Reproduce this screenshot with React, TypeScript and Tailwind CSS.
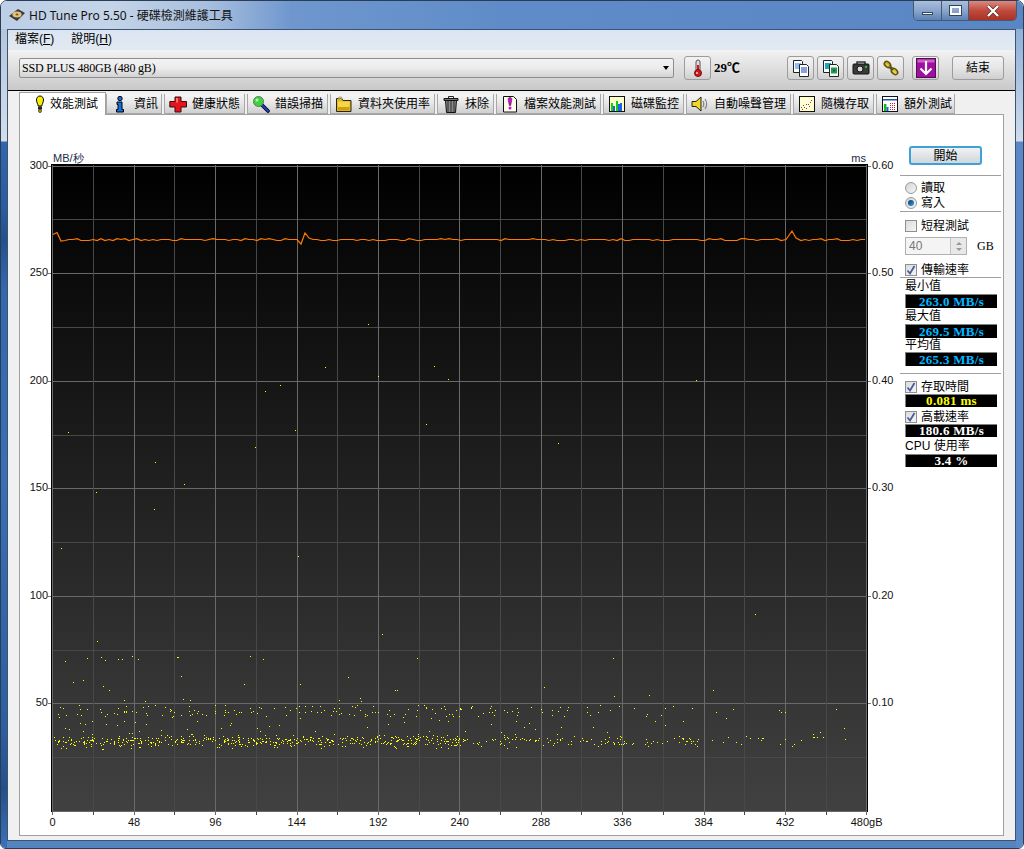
import React from "react";

function rng(seed: number) {
  let s = seed;
  return () => {
    s = (s * 1664525 + 1013904223) % 4294967296;
    return s / 4294967296;
  };
}

const sparse: [number, number][] = [
  [368,324],[325,367],[434,366],[448,379],[378,376],[696,380],[280,385],[265,391],[295,430],[426,424],[68,432],[558,443],[255,447],[155,462],[184,484],[96,492],[154,509],[61,548],[298,556],[755,614],[382,634],[97,641],
  [65,661],[87,658],[101,657],[105,660],[118,659],[122,659],[132,656],[138,659],[177,657],[178,657],[250,656],[263,659],[417,658],[181,676],[73,682],[83,680],[103,686],[109,690],[244,684],[300,684],[348,677],[395,690],[397,690],[124,700],[145,701],[183,699],[190,700],[339,700],[360,698],[361,701],[613,658],[544,687],[713,690],[614,696],[649,695],
];

function buildDots() {
  const r = rng(20240611);
  const pts: [number, number][] = [...sparse];
  const add = (n: number, x0: number, x1: number, y0: number, y1: number, g: boolean) => {
    for (let i = 0; i < n; i++) {
      const x = x0 + r() * (x1 - x0);
      const t = g ? (r() + r() + r()) / 3 : r();
      pts.push([Math.round(x), Math.round(y0 + t * (y1 - y0))]);
    }
  };
  add(500, 53, 460, 732, 750, true);
  add(115, 460, 700, 732, 750, true);
  add(22, 700, 860, 733, 749, true);
  add(125, 53, 460, 705, 716, false);
  add(42, 460, 700, 705, 716, false);
  add(6, 700, 860, 708, 714, false);
  add(38, 53, 460, 716, 734, false);
  add(14, 460, 700, 716, 734, false);
  add(3, 700, 860, 716, 734, false);
  return pts.map(([x, y]) => `M${x} ${y}h1v1h-1z`).join("");
}

function buildLine() {
  const r = rng(77123);
  const spikes: [number, number][] = [
    [53, 234.5], [57, 232.5], [61, 241],
    [297, 239.5], [301, 244], [305, 233], [309, 238],
    [786, 239.5], [792, 231], [796, 238],
  ];
  const pts: [number, number][] = [...spikes];
  for (let x = 65; x <= 866; x += 4) {
    if (spikes.some(([sx]) => Math.abs(sx - x) < 4)) continue;
    pts.push([x, 239.5 + (r() < 0.3 ? 1 : r() < 0.25 ? -0.8 : 0)]);
  }
  pts.sort((a, b) => a[0] - b[0]);
  return pts.map(([x, y]) => `${x},${y}`).join(" ");
}

const DOTS = buildDots();
const LINE = buildLine();

function Chart() {
  const vs = Array.from({ length: 21 }, (_, i) => ({ x: Math.round(52.3 + 40.7 * i), major: i % 2 === 0 }));
  const hs = Array.from({ length: 13 }, (_, i) => ({ y: Math.round(811 - 53.78 * i), major: i % 2 === 0 }));
  const left = ["", "50", "100", "150", "200", "250", "300"];
  const right = ["", "0.10", "0.20", "0.30", "0.40", "0.50", "0.60"];
  const bottom = ["0", "48", "96", "144", "192", "240", "288", "336", "384", "432", "480gB"];
  return (
    <svg
      width={880}
      height={722}
      viewBox="20 115 880 722"
      className="block shrink-0 text-[11px] font-['Liberation_Sans',sans-serif]"
    >
      <defs>
        <linearGradient id="chartBg" x1="0" y1="0" x2="0" y2="1">
          <stop offset="0" stopColor="#000000" />
          <stop offset="1" stopColor="#414141" />
        </linearGradient>
      </defs>
      <g shapeRendering="crispEdges">
        <rect x={51} y={164} width={817} height={648} fill="#000" />
        <rect x={53} y={165} width={813} height={646} fill="url(#chartBg)" />
        {hs.map((h) => (
          <rect key={h.y} x={53} y={h.y} width={813} height={1} fill={h.major ? "#696969" : "#484848"} />
        ))}
        {vs.map((v) => (
          <rect key={v.x} x={v.x} y={165} width={1} height={650} fill={v.major ? "#6a6a6a" : "#484848"} />
        ))}
        {hs.filter((h) => h.major && h.y < 800).map((h) => (
          <g key={h.y}>
            <rect x={48} y={h.y} width={3} height={1} fill="#777" />
            <rect x={868} y={h.y} width={3} height={1} fill="#777" />
          </g>
        ))}
        <path d={DOTS} fill="#ffff00" />
      </g>
      <polyline points={LINE} fill="none" stroke="#ff7a00" strokeWidth={1.2} />
      <text x={53} y={162} fill="#1a2a4a">MB/秒</text>
      <text x={866} y={162} textAnchor="end" fill="#1a2a4a">ms</text>
      {left.map((t, i) => (
        <text key={t + i} x={48} y={811 - 107.56 * i + 3} textAnchor="end" fill="#111">{t}</text>
      ))}
      {right.map((t, i) => (
        <text key={t + i} x={872} y={811 - 107.56 * i + 3} fill="#111">{t}</text>
      ))}
      {bottom.map((t, i) => (
        <text key={t} x={52.6 + 81.4 * i} y={826} textAnchor="middle" fill="#111">{t}</text>
      ))}
    </svg>
  );
}

/* ---------- icons ---------- */
const S = { width: 18, height: 18, viewBox: "0 0 18 18", className: "block shrink-0" };

const Bulb = () => (
  <svg {...S}>
    <path d="M9 1C6.500 1 5.500 3 5.500 5c0 2.500 1.500 4 1.700 6h3.600c.2-2 1.700-3.500 1.700-6 0-2-1-4-3.500-4z" fill="#f6ee00" stroke="#000" />
    <rect x="7" y="11.500" width="4" height="3" fill="#222" />
    <circle cx="9" cy="16" r="1.500" fill="#c8b400" stroke="#000" strokeWidth=".6" />
  </svg>
);
const Info = () => (
  <svg {...S}>
    <circle cx="9" cy="3.500" r="2.200" fill="#1470e0" stroke="#000" />
    <path d="M6 7h5v7.500h1.500V17h-7v-2.500H7V9.500H6z" fill="#1470e0" stroke="#000" />
  </svg>
);
const Cross = () => (
  <svg {...S}>
    <path d="M6 2h6v4.500h5.500v5.500H12v5H6v-5H.8V6.500H6z" fill="#e8141c" stroke="#3a0a0a" />
    <path d="M7 3h2v4.500H7z" fill="#ff7070" />
  </svg>
);
const Magnifier = () => (
  <svg {...S}>
    <path d="M10 10l6 6" stroke="#000" strokeWidth="3.600" strokeLinecap="round" />
    <path d="M10 10l6 6" stroke="#1c3fc8" strokeWidth="2" strokeLinecap="round" />
    <circle cx="6.500" cy="6.500" r="5" fill="#3fd23f" stroke="#5a7a5a" />
    <circle cx="5" cy="5" r="1.500" fill="#b8f5b8" />
  </svg>
);
const Folder = () => (
  <svg {...S}>
    <path d="M1.500 3.500h5l1.500 2h8v11h-14.500z" fill="#e2b90f" stroke="#222" />
    <path d="M2.500 3.500c2-2 4-2 5 0" fill="#f9efa0" stroke="#555" strokeWidth=".6" />
    <rect x="3" y="6.500" width="11.500" height="9" fill="#f5d64a" />
    <rect x="3" y="12" width="11.500" height="3.500" fill="#cf9f0a" />
  </svg>
);
const Trash = () => (
  <svg {...S}>
    <path d="M2 3.500h14v2H2z" fill="#777" stroke="#111" />
    <path d="M6.500 3.500V1.500h5v2" fill="none" stroke="#222" />
    <path d="M3.500 5.500h11l-1 12h-9z" fill="#8a8a8a" stroke="#111" />
    <path d="M6 6v11M9 6v11M12 6v11" stroke="#2c2c2c" />
  </svg>
);
const FileEx = () => (
  <svg {...S}>
    <path d="M2.500 1.500h10l3 3v12.500h-13z" fill="#fffff0" stroke="#111" />
    <path d="M9 2.500c2 0 2 1.500 1.700 3L9.700 10.500H8.300L7.300 5.500C7 4 7 2.500 9 2.500z" fill="#d010c8" stroke="#301030" strokeWidth=".5" />
    <circle cx="9" cy="13" r="1.500" fill="#d010c8" />
  </svg>
);
const BarsIcon = () => (
  <svg {...S}>
    <rect x="1.500" y="1.500" width="15" height="15" fill="#ffffc8" stroke="#111" />
    <rect x="3" y="8" width="2" height="8" fill="#10d010" />
    <rect x="5" y="11" width="2" height="5" fill="#2060f0" />
    <rect x="8" y="6" width="2" height="10" fill="#10d010" />
    <rect x="10" y="9" width="2" height="7" fill="#2060f0" />
    <rect x="12" y="8" width="2" height="8" fill="#2060f0" />
  </svg>
);
const Speaker = () => (
  <svg {...S}>
    <path d="M1 6.500h4l5-4.500v14l-5-4.500H1z" fill="#f0d820" stroke="#222" />
    <path d="M12 6c1 2 1 4 0 6M14 4c2 3 2 7 0 10" fill="none" stroke="#888" strokeWidth="1.300" />
  </svg>
);
const Scatter = () => (
  <svg {...S}>
    <rect x="1.500" y="1.500" width="15" height="15" fill="#ffffd0" stroke="#111" />
    <path d="M4 14h1v1H4zM6 12h1v1H6zM8 13h1v1H8zM10 9h1v1h-1zM12 7h1v1h-1z" fill="#e02020" />
    <path d="M5 10h1v1H5zM8 9h1v1H8zM11 11h1v1h-1zM13 5h1v1h-1zM3 12h1v1H3z" fill="#3050e0" />
  </svg>
);
const CalcIcon = () => (
  <svg {...S}>
    <rect x="1.500" y="1.500" width="15" height="15" fill="#fff" stroke="#111" />
    <rect x="2" y="4" width="14" height="1.500" fill="#2050b0" />
    <rect x="3" y="9" width="2.500" height="7" fill="#10c010" />
    <rect x="5.500" y="12" width="2" height="4" fill="#2060f0" />
    <path d="M9 8h1v1H9zM11 8h1v1h-1zM13 8h1v1h-1zM9 10h1v1H9zM11 10h1v1h-1zM13 10h1v1h-1zM9 12h1v1H9zM11 12h1v1h-1zM13 12h1v1h-1zM9 14h1v1H9zM11 14h1v1h-1zM13 14h1v1h-1z" fill="#c02040" />
  </svg>
);
const Thermo = () => (
  <svg {...S} className="block">
    <rect x="7" y="1" width="4" height="11" rx="2" fill="#e8d8d8" stroke="#555" />
    <rect x="8" y="6" width="2" height="7" fill="#d81818" />
    <circle cx="9" cy="14" r="3.500" fill="#d81818" stroke="#6a1010" />
    <circle cx="8" cy="14" r="1" fill="#ffd0d0" />
  </svg>
);
const Docs = () => (
  <svg {...S} className="block">
    <path d="M1.500 1.500h8l1 1v11h-9z" fill="#fff" stroke="#222" />
    <path d="M3 5h6M3 7h6M3 9h6" stroke="#1080f0" />
    <path d="M7.500 5.500h7l2 2v10h-9z" fill="#fff" stroke="#222" />
    <path d="M9 9h6M9 11h6M9 13h6" stroke="#1040c0" />
  </svg>
);
const DocsPic = () => (
  <svg {...S} className="block">
    <path d="M1.500 1.500h8l1 1v11h-9z" fill="#fff" stroke="#222" />
    <rect x="3" y="4" width="6" height="6" fill="#18a0e8" />
    <rect x="4.500" y="6" width="2" height="2" fill="#20c020" />
    <path d="M7.500 5.500h7l2 2v10h-9z" fill="#f8f8f8" stroke="#222" />
    <rect x="9" y="8.500" width="6" height="6" fill="#20a040" />
    <rect x="11" y="10.500" width="2" height="2" fill="#1048c0" />
  </svg>
);
const Camera = () => (
  <svg {...S} className="block">
    <path d="M5 5V3h8v2" fill="none" stroke="#333" strokeWidth="1.500" />
    <rect x="1" y="5" width="16" height="10" rx="1" fill="#3a3a3a" stroke="#111" />
    <circle cx="8" cy="10" r="3" fill="#d8d8d8" stroke="#111" />
    <rect x="13" y="7" width="2" height="2" fill="#20c020" />
  </svg>
);
const Links = () => (
  <svg {...S} className="block">
    <ellipse cx="5.500" cy="5.500" rx="3.600" ry="2.600" transform="rotate(45 5.500 5.500)" fill="#c8ae20" stroke="#5e5210" strokeWidth="1.500" />
    <ellipse cx="12.500" cy="12.500" rx="3.600" ry="2.600" transform="rotate(45 12.500 12.500)" fill="#d8c030" stroke="#5e5210" strokeWidth="1.500" />
    <path d="M7 7l4 4" stroke="#5e5210" strokeWidth="3" />
    <path d="M4 4.500l3 3M11 11.500l3 3" stroke="#f4e888" />
  </svg>
);
const PurpleDown = () => (
  <svg width={20} height={20} viewBox="0 0 20 20" className="block">
    <rect x=".5" y=".5" width="19" height="19" fill="#a010a0" stroke="#501050" />
    <rect x="1.500" y="1.500" width="17" height="3" fill="#d060c8" />
    <path d="M10 3v13M4.500 10.500L10 16l5.500-5.500" fill="none" stroke="#fff" strokeWidth="2.200" />
  </svg>
);
const Disk = () => (
  <svg width={16} height={14} viewBox="0 0 16 14" className="block shrink-0">
    <path d="M0 8L9 1l7 4-8 8z" fill="#3d3b38" />
    <ellipse cx="8" cy="6.500" rx="4.600" ry="3" fill="#e5c07a" />
    <ellipse cx="8" cy="6.500" rx="1.500" ry="1" fill="#7a5a2a" />
  </svg>
);

/* ---------- controls ---------- */
const Check = ({ on }: { on?: boolean }) => (
  <span className="flex h-[12px] w-[12px] shrink-0 items-center justify-center border border-[#8e8f8f] bg-gradient-to-br from-[#dcdcdc] to-[#f4f4f4]">
    {on && (
      <svg width={10} height={10} viewBox="0 0 10 10" className="block">
        <path d="M1.500 5.500L4 8.500 8.500 1" fill="none" stroke="#4a5c9c" strokeWidth="1.800" />
      </svg>
    )}
  </span>
);

const Radio = ({ on }: { on?: boolean }) => (
  <span className="flex h-[12px] w-[12px] shrink-0 items-center justify-center rounded-full border border-[#9a9a9a] bg-gradient-to-br from-[#d4d4d4] to-[#f6f6f6]">
    {on && <span className="h-[6px] w-[6px] rounded-full bg-gradient-to-br from-[#0a3a6a] to-[#3aa0e0]" />}
  </span>
);

const Row = ({ children, className }: { children: React.ReactNode; className: string }) => (
  <div className={`flex h-[15px] items-center gap-[4px] pl-[5px] ${className}`}>
    {children}
  </div>
);

const Sep = ({ className }: { className: string }) => <div className={`h-px w-[101px] bg-[#a0a0a0] ${className}`} />;

const Value = ({ text, color, h }: { text: string; color: string; h: string }) => (
  <div
    className={`ml-[5px] flex ${h} w-[92px] items-center justify-center border-l border-t border-[#808080] bg-black text-[13px] font-bold tracking-[0.3px] font-['Liberation_Serif',serif] ${color}`}
  >
    {text}
  </div>
);

const Label = ({ text, className }: { text: string; className: string }) => (
  <div className={`flex items-center pl-[5px] ${className}`}>{text}</div>
);

const tabs: { w: string; label: string; Icon: () => React.ReactElement }[] = [
  { w: "w-[56px]", label: "資訊", Icon: Info },
  { w: "w-[81px]", label: "健康狀態", Icon: Cross },
  { w: "w-[81px]", label: "錯誤掃描", Icon: Magnifier },
  { w: "w-[105px]", label: "資料夾使用率", Icon: Folder },
  { w: "w-[57px]", label: "抹除", Icon: Trash },
  { w: "w-[105px]", label: "檔案效能測試", Icon: FileEx },
  { w: "w-[81px]", label: "磁碟監控", Icon: BarsIcon },
  { w: "w-[105px]", label: "自動噪聲管理", Icon: Speaker },
  { w: "w-[81px]", label: "隨機存取", Icon: Scatter },
  { w: "w-[79px]", label: "額外測試", Icon: CalcIcon },
];

const toolBtn =
  "flex h-[24px] w-[27px] shrink-0 items-center justify-center rounded-[3px] border border-[#9c9c9c] bg-gradient-to-b from-[#f2f2f2] via-[#e6e6e6] to-[#cfcfcf]";

export default function App() {
  return (
    <div className="flex h-[849px] w-[1024px] flex-col overflow-hidden rounded-t-[7px] rounded-b-[6px] border border-[#2b3d55] text-[12px] text-black font-['Liberation_Sans','Noto_Sans_CJK_TC',sans-serif]">
      {/* title bar */}
      <div className="flex h-[28px] shrink-0 items-start bg-[linear-gradient(90deg,#bdcfe6_0,#c4d4e8_110px,#a6bedd_210px,#6f97ce_290px,#5f8cc8_500px,#5a87c4_100%)] pr-[6px]">
        <div className="ml-[8px] mt-[7px]">
          <Disk />
        </div>
        <div className="ml-[4px] mt-[6px] text-[12px] leading-[18px] text-[#111] font-['Noto_Sans','Noto_Sans_CJK_TC',sans-serif]">
          HD Tune Pro 5.50 - 硬碟檢測維護工具
        </div>
        <div className="ml-auto flex h-[20px] overflow-hidden rounded-b-[5px] border border-t-0 border-[#44597a]">
          <div className="flex w-[28px] items-center justify-center border-r border-[#44597a] bg-gradient-to-b from-[#a9bedb] via-[#8aa6cc] to-[#5e82b4]">
            <span className="mt-[6px] h-[3px] w-[11px] border border-[#33465f] bg-white" />
          </div>
          <div className="flex w-[27px] items-center justify-center border-r border-[#44597a] bg-gradient-to-b from-[#a9bedb] via-[#8aa6cc] to-[#5e82b4]">
            <span className="h-[9px] w-[11px] border-2 border-white outline outline-1 outline-[#33465f]" />
          </div>
          <div className="flex w-[47px] items-center justify-center bg-gradient-to-b from-[#d88a80] via-[#c04a3e] to-[#a83226]">
            <svg width={14} height={12} viewBox="0 0 14 12" className="block">
              <path d="M2 1l10 10M12 1L2 11" stroke="#5a2020" strokeWidth="3.600" />
              <path d="M2 1l10 10M12 1L2 11" stroke="#fff" strokeWidth="2.400" />
            </svg>
          </div>
        </div>
      </div>

      <div className="flex min-h-0 flex-1 bg-[#5585c1]">
        {/* left frame */}
        <div className="w-[6px] shrink-0 bg-[linear-gradient(180deg,#b4c6dc_0,#d4deea_112px,#2f66ad_113px,#2a5c9f_180px,#23508c_210px,#3468ad_260px,#3a6fb4_450px,#2d5f9f_700px,#24508a_760px,#3a6fb4_815px)]" />
        {/* client */}
        <div className="mb-[7px] flex min-w-0 flex-1 flex-col border border-[#3b5474] bg-[#f0f0f0]">
          <div className="flex h-[20px] shrink-0 items-center gap-[17px] bg-gradient-to-b from-[#dbe5f1] to-[#e2e9f2] pb-[2px] pl-[7px]">
            <span>
              檔案(<span className="underline">F</span>)
            </span>
            <span>
              說明(<span className="underline">H</span>)
            </span>
          </div>
          <div className="flex h-[41px] shrink-0 items-center border-b border-black bg-gradient-to-b from-[#f2f2f2] to-[#c9c9c9] pb-[4px] pl-[11px]">
            <div className="flex h-[20px] w-[655px] shrink-0 items-center justify-between rounded-[2px] border border-[#8e8e8e] bg-gradient-to-b from-[#f2f2f2] via-[#ececec] to-[#d2d2d2] pl-[2px] pr-[4px] tracking-[-0.2px] font-['Liberation_Serif',serif]">
              <span>SSD PLUS 480GB (480 gB)</span>
              <span className="h-0 w-0 border-x-[3.5px] border-t-[4px] border-x-transparent border-t-black" />
            </div>
            <div className={`${toolBtn} ml-[10px]`}>
              <Thermo />
            </div>
            <div className="ml-[3px] w-[73px] shrink-0 text-[13px] font-bold font-['Liberation_Serif','Noto_Sans_CJK_TC',serif]">29℃</div>
            <div className="flex gap-[3px]">
              <div className={toolBtn}><Docs /></div>
              <div className={toolBtn}><DocsPic /></div>
              <div className={toolBtn}><Camera /></div>
              <div className={toolBtn}><Links /></div>
            </div>
            <div className={`${toolBtn} ml-[8px]`}><PurpleDown /></div>
            <div className={`${toolBtn} ml-[13px] !w-[52px]`}>結束</div>
          </div>

          {/* tab area */}
          <div className="flex min-h-0 flex-1 flex-col px-[11px] pb-[4px]">
            <div className="relative z-10 flex h-[23px] shrink-0 items-end gap-[2px]">
              <div className="-mb-px -mr-[2px] flex h-[23px] w-[87px] shrink-0 items-center border border-b-0 border-[#a0a0a0] bg-white pl-[11px]">
                <Bulb />
                <span className="ml-[1px]">效能測試</span>
              </div>
              {tabs.map((t) => (
                <div
                  key={t.label}
                  className={`flex h-[20px] ${t.w} shrink-0 items-center gap-[5px] border-x border-b border-[#a8a8a8] bg-gradient-to-b from-[#f6f6f6] via-[#e6e6e6] to-[#cfcfcf] pl-[4px]`}
                >
                  <t.Icon />
                  <span>{t.label}</span>
                </div>
              ))}
            </div>
            <div className="flex min-h-0 flex-1 border border-[#a0a0a0] bg-white">
              <Chart />
              <div className="flex w-[103px] shrink-0 flex-col pt-[31px]">
                <div className="ml-[9px] flex h-[19px] w-[73px] items-center justify-center rounded-[3px] border-2 border-[#3ea2d8] bg-gradient-to-b from-[#f2f2f2] to-[#cfd6dc]">
                  開始
                </div>
                <Sep className="mt-[10px]" />
                <Row className="mt-[4px]"><Radio /><span>讀取</span></Row>
                <Row className=""><Radio on /><span>寫入</span></Row>
                <Sep className="mt-[1px]" />
                <Row className="mt-[6px]"><Check /><span>短程測試</span></Row>
                <div className="ml-[5px] mt-[4px] flex h-[18px] items-center">
                  <div className="flex h-[18px] w-[62px] items-center justify-between border border-[#b0b0b0] bg-[#f4f4f4] pl-[3px] text-[#777]">
                    <span>40</span>
                    <div className="flex h-full w-[16px] flex-col items-center justify-center gap-[3px] border-l border-[#c4c4c4] bg-[#e8e8e8]">
                      <span className="h-0 w-0 border-x-[3px] border-b-[3px] border-x-transparent border-b-[#9a9a9a]" />
                      <span className="h-0 w-0 border-x-[3px] border-t-[3px] border-x-transparent border-t-[#9a9a9a]" />
                    </div>
                  </div>
                  <span className="ml-[10px] text-[12px] font-['Liberation_Serif',serif]">GB</span>
                </div>
                <Row className="mt-[7px]"><Check on /><span>傳輸速率</span></Row>
                <Sep className="" />
                <Label text="最小值" className="h-[16px]" />
                <Value text="263.0 MB/s" color="text-[#00b8ff]" h="h-[14px]" />
                <Label text="最大值" className="h-[16px]" />
                <Value text="269.5 MB/s" color="text-[#00b8ff]" h="h-[14px]" />
                <Label text="平均值" className="h-[14px]" />
                <Value text="265.3 MB/s" color="text-[#00b8ff]" h="h-[14px]" />
                <Sep className="mt-[7px]" />
                <Row className="mt-[5px]"><Check on /><span>存取時間</span></Row>
                <Value text="0.081 ms" color="text-[#ffff00]" h="h-[13px]" />
                <Row className="mt-[2px]"><Check on /><span>高載速率</span></Row>
                <Value text="180.6 MB/s" color="text-white" h="h-[13px]" />
                <Label text="CPU 使用率" className="h-[17px]" />
                <Value text="3.4 %" color="text-white" h="h-[13px]" />
              </div>
            </div>
          </div>
        </div>
        {/* right frame */}
        <div className="w-[7px] shrink-0 bg-[linear-gradient(180deg,#8fb0d8_0,#d0dcea_112px,#5b89c6_113px,#5b89c6_100%)]" />
      </div>
    </div>
  );
}
